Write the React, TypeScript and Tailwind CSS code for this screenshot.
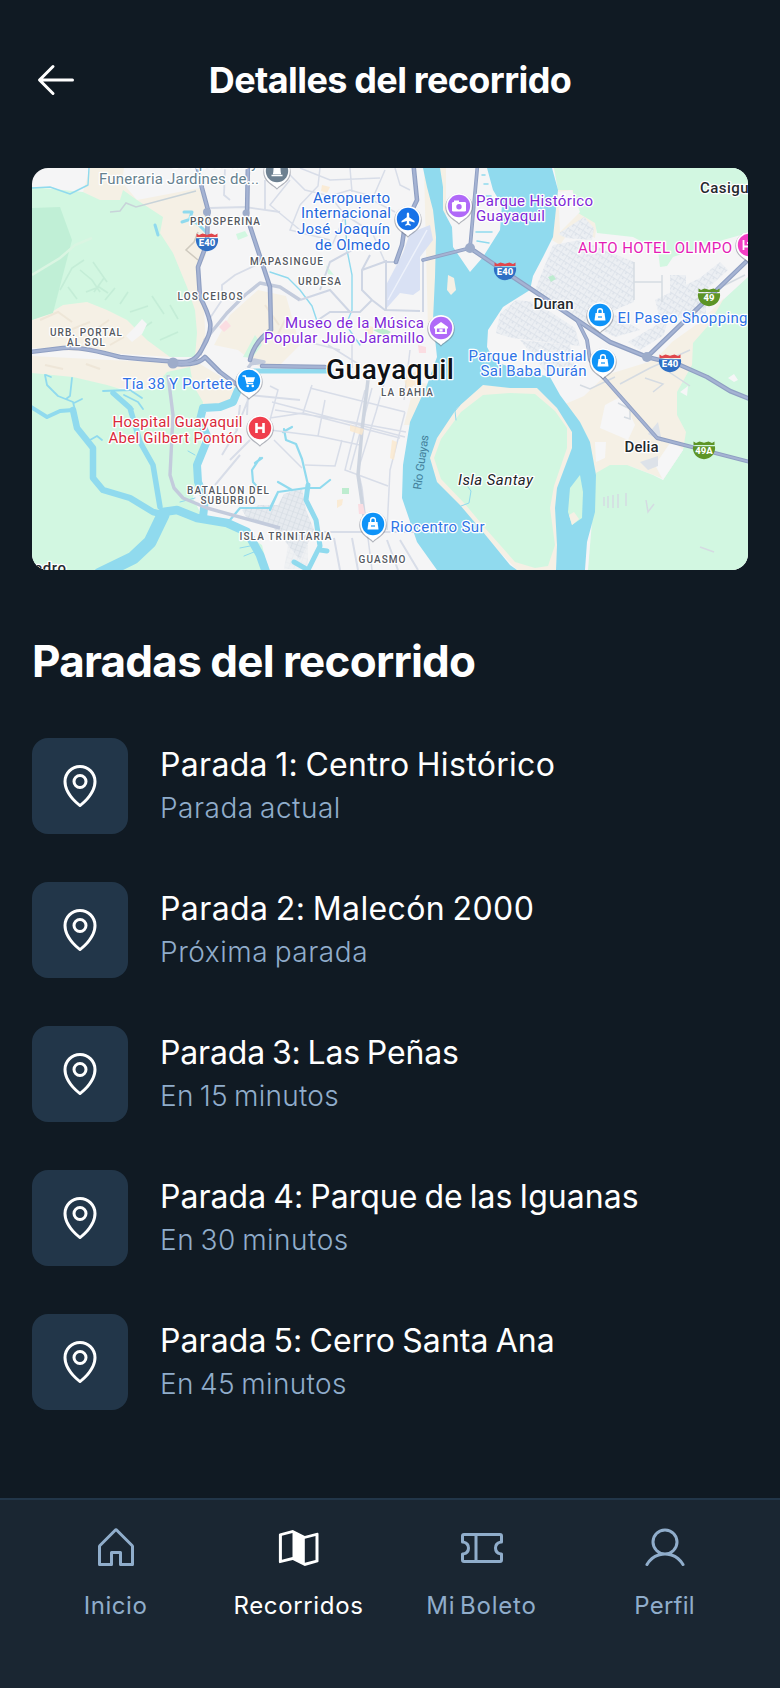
import React from "react";
import { PiArrowLeft, PiHouse, PiMapPin, PiTicket, PiUser } from "react-icons/pi";

type LabelProps = {
  x: number;
  y: number;
  w: number;
  children: string;
  fill?: string;
  size?: number;
  weight?: number;
  italic?: boolean;
};

/* Map label: x is the left edge, y the baseline and w the drawn width. */
function Label({ x, y, w, children, fill = "#55595f", size = 10, weight, italic }: LabelProps) {
  return (
    <text
      x={x}
      y={y}
      textLength={w}
      lengthAdjust="spacing"
      fontSize={size}
      fontWeight={weight ?? (size > 10 ? 400 : 500)}
      fontStyle={italic ? "italic" : undefined}
      fill={fill}
      stroke="#ffffff"
      strokeWidth={2.6}
      strokeLinejoin="round"
      paintOrder="stroke"
    >
      {children}
    </text>
  );
}

function Pin({ x, y, color, children }: { x: number; y: number; color: string; children?: React.ReactNode }) {
  return (
    <g transform={`translate(${x} ${y})`}>
      <path d="M0 18.800 C-3 14.800-13.700 11.500-13.700 1 A13.700 13.700 0 1 1 13.700 1 C13.700 11.500 3 14.800 0 18.800Z" fill="#6b7280" opacity=".5" />
      <path d="M0 17.300 C-3 13.300-12.900 10.800-12.900-.2 A12.900 12.900 0 1 1 12.900-.2 C12.900 10.800 3 13.300 0 17.300Z" fill="#fff" />
      <circle r="11.2" fill={color} />
      {children}
    </g>
  );
}

const Bag = () => (
  <g>
    <path d="M-4.500-2H4.500L5.500 5.500H-5.500Z" fill="#fff" />
    <path d="M-2.4 -2v-1.8a2.4 2.4 0 0 1 4.8 0V-2" fill="none" stroke="#fff" strokeWidth="1.4" />
    <path d="M-2 2h4" stroke="#0e93f8" strokeWidth="1.2" />
  </g>
);

function Shield({ x, y, text, top = "#e0474c", body = "#2f6fc4" }: { x: number; y: number; text: string; top?: string; body?: string }) {
  return (
    <g transform={`translate(${x} ${y})`}>
      <path d="M-10.5-8.5 L-8-7 L-4.5-8.5 L0-7.2 L4.5-8.5 L8-7 L10.5-8.5 L10.5-5 H-10.5Z" fill={top} />
      <path d="M-11-3.8H11C12 3 7 8.8 0 9.2C-7 8.8-12 3-11-3.8Z" fill={body} />
      <text x="0" y="4.4" textAnchor="middle" fontSize="9.5" fontWeight="800" fill="#fff">
        {text}
      </text>
    </g>
  );
}

const WATER = "#90daee";
const GREEN = "#d2f7e1";
const SAND = "#f5f0e5";

function CityMap() {
  return (
    <svg viewBox="32 168 716 402" preserveAspectRatio="none" className="block h-full w-full" fontFamily="Roboto, sans-serif">
      <defs>
        <pattern id="blocks" width="7" height="6" patternUnits="userSpaceOnUse" patternTransform="rotate(32)">
          <rect width="7" height="6" fill="#eceff3" />
          <path d="M0 0H7M0 0V6M3.5 0V3" stroke="#dbe1e9" strokeWidth="1.4" />
        </pattern>
        <pattern id="blocks2" width="5" height="5" patternUnits="userSpaceOnUse" patternTransform="rotate(20)">
          <rect width="5" height="5" fill="#e6eaef" />
          <path d="M0 0H5M0 0V5" stroke="#d3dae2" strokeWidth="1.2" />
        </pattern>
      </defs>
      <rect x="32" y="168" width="716" height="402" fill="#f5f5f6" />

      {/* Sand and built-up ground */}
      <g fill={SAND}>
        <path d="M83 192L90 168H124L122 182L137 200L200 188L209 215L206 255L196 275L204 310L206 345L195 358L160 235L120 201L100 201Z" />
        <path d="M32 318L60 300L105 300L170 357L32 348Z" />
        <path d="M32 356L110 360L120 372L110 388L32 376Z" />
        <path d="M110 360L200 364L235 385L230 402L203 406L150 388L110 388Z" />
        <path d="M258 290L286 296L300 345L280 365L258 366L238 350L214 345L230 315Z" />
        <path d="M424 168H446V250H436V330L428 330Z" />
        <path d="M415 382L430 384L410 425L404 425Z" />
        <path d="M554 168L573 190L575 209L597 222L595 238L573 226L560 245L552 240L558 190Z" />
        <path d="M596 476L580 422L563 405L584 396L606 375L655 360L672 342L700 322L724 298L706 400L688 440L664 479L630 466Z" />
        <path d="M483 385L510 386L540 387L560 408L575 432L574 450L560 488L556 570H517L483 535L434 482L427 458L436 434L456 406Z" />
      </g>

      {/* Parkland */}
      <g fill={GREEN}>
        <path d="M32 187L83 192L100 200H120L123 190L137 200L163 217L160 233L173 253L187 287L195 310L197 333L195 357L170 357L147 340L127 320L107 310L87 302L63 305L50 313L32 320Z" />
        <path d="M32 373L73 377L107 385L130 392L153 388L167 372L190 367L193 385L203 402L200 465L193 498L203 518L235 527L262 545L268 570H32Z" />
        <path d="M554 168H748V233L723 240L673 257L667 266L660 267L658 250L633 237L597 233L595 223L573 210V190L558 190Z" />
        <path d="M748 277L723 300L707 327L693 343L692 365L677 392V415L686 432L683 450L663 480L653 475L627 465H610L596 473L588 570H748Z" />
      </g>
      <path d="M558 192L572 190L580 212L560 232Z" fill="#f5f5f6" />
      <path d="M32 208L60 207L72 240L53 313L32 320Z" fill="#c0efd6" />
      <g fill="none" stroke="#bfe9d3" strokeWidth="1.6" opacity=".75">
        <path d="M80 270l12 10l8 12M93 262l14 20M104 278l-10 14M86 292l13-5l9 6M115 288l-10 12M68 287l9 12M140 330l12-8M130 312l18-6M160 340l18-8M120 304l8-12M60 290l12-22l12-8M152 296l12 18M170 305l8 14" />
      </g>
      <path d="M32 275L60 258L75 245L92 238" fill="none" stroke="#daf5e2" strokeWidth="2.5" />
      <g fill="none" stroke="#e9e0cf" strokeWidth="2" opacity=".6">
        <path d="M40 320l18-8l14 10M70 330l20-8M95 330l14-10M110 345l14-8M45 365l18 4M86 364l14 5M265 305l14 20M285 320l-10 20" />
      </g>
      <path d="M134 328L142 319L147 324L142 334L132 342L126 336Z" fill="#f5f5f6" />
      <g fill={GREEN}>
        <path d="M236 234L245 231L248 236L238 240Z" />
        <path d="M255 335L262 345L252 358L243 357Z" />
        <path d="M326 265L334 275L328 274Z" />
      </g>
      <path d="M219 327L226 320L231 326L224 332Z" fill="#fbdde2" />

      {/* Dense quarters */}
      <g fill="url(#blocks)">
        <path d="M584 217L594 228L592 240L566 238L558 234Z" />
        <path d="M553 245L580 240L634 262V302L610 312L640 330L615 337L578 318L535 290Z" />
        <path d="M516 300L535 302L575 328L580 346L512 338L496 333L500 314Z" />
        <path d="M520 340L570 345L576 372L548 374Z" />
        <path d="M655 300L700 278L720 262L728 270L706 290L706 318L660 318Z" />
        <path d="M628 342L668 318L664 335L640 350Z" />
        <path d="M670 275h16v20h-16z" />
      </g>
      <path d="M284 494L302 488L306 510L314 530L300 560L288 545L270 524L250 515L258 505L278 505Z" fill="url(#blocks2)" />
      <path d="M242 510L262 505L284 528L248 520Z" fill="url(#blocks2)" />
      <path d="M288 545h20v24h-24z" fill="url(#blocks2)" opacity=".4" />
      <path d="M605 405L622 396L635 425L628 440L600 428ZM595 442L606 442L605 458L596 462ZM655 465L672 440L683 450L663 480Z" fill="#f6f6f7" />
      <path d="M640 462l18-6v10l-10 4zM648 434l10-12l4 20z" fill="#dde2e9" />
      <path d="M680 392l8-6l-1 10zM728 378l6-4l4 6l-4 2z" fill="#f6f6f7" />

      {/* Airport */}
      <path d="M430 225L433 240L420 257V290L413 295L400 293L385 310V287L403 253L410 233Z" fill="#d9e1f4" />
      <path d="M388 300L427 230" stroke="#eef2fb" strokeWidth="1.4" />

      {/* Rivers */}
      <path
        d="M423 168L427 187L433 210L436 237L435 277L433 320L437 357L427 385L410 422L403 465L402 498L417 542L437 570H517L510 565L483 532L460 505L437 482L430 458L437 438L457 408L483 385L510 388H537L557 408L572 432V448L557 488L555 508L557 545L556 570H585L587 542L595 512L596 475L590 442L580 422L560 395L550 377L520 370L495 362L487 347L488 330L503 307L530 290L533 276L543 257L553 237L558 190L552 168H487L493 190L502 205L500 230L483 257L470 272L453 247L452 227L443 210V187L440 168Z"
        fill={WATER}
      />
      <path d="M448 275L454 278L456 290L451 295L447 290Z" fill={SAND} />
      <path d="M510 393L535 394L555 411L567 428V448L554 486L550 508L555 545L548 566L535 568L515 562L485 528L465 504L441 479L434 458L441 439L461 412L483 395Z" fill={GREEN} />
      <path d="M580 475L570 488L568 512L572 525L582 518L583 492Z" fill={GREEN} />
      <path d="M569 515L574 512L579 519L572 525Z" fill={SAND} />
      <g fill="none" stroke={WATER} strokeLinecap="round" strokeLinejoin="round">
        <path d="M31 407L47 417L60 411L73 410" strokeWidth="4" />
        <path d="M73 410L77 428L93 448V478L103 490L130 498L153 512L165 515" strokeWidth="6.5" />
        <path d="M163 512L177 510L197 518L227 523L247 532L260 555L266 572" strokeWidth="8.5" />
        <path d="M163 515L150 542L133 558L100 574" strokeWidth="13" />
        <path d="M113 393L130 408L140 442L153 465L160 507" strokeWidth="5.5" />
        <path d="M238 390L233 402L220 407L203 408L200 420L208 438L197 465L198 482L205 498L203 518" strokeWidth="8" />
        <path d="M241 388L254 371H330" strokeWidth="5" />
        <path d="M45 375L47 385L58 396L73 402L75 410M72 378L70 396L66 399M82 399L74 403M103 391L130 390L142 398M124 395L138 402L143 409M126 404L133 409M90 440L97 436L102 440M46 375l5 2" strokeWidth="1.8" />
        <path d="M283 432L292 427M284 429L286 440L296 444L302 459L308 485M230 520L240 508L270 508L278 492L306 488L320 488L330 480M278 482L292 490M278 492L270 510" strokeWidth="2.2" />
        <path d="M308 485L306 500L316 520L320 546L308 570M320 550L327 551M308 570L294 562" strokeWidth="5" />
        <path d="M260 458L252 470L253 482L260 490M262 458L255 463" strokeWidth="2.2" />
        <path d="M32 188L50 187L70 194L88 185L89 168M270 272L288 278L300 290L312 306L318 324M345 215L347 250L352 275L352 310L346 325L360 345" strokeWidth="1.4" />
        <path d="M155 225L158 235M184 212L192 212L190 218L199 225L206 232M188 220L182 222" strokeWidth="3" />
        <path d="M240 548L250 546M244 556L254 552M195 455L188 451M195 498L180 502" strokeWidth="1" />
        <path d="M482 175h3M484 184h4M486 196h5M476 232h16M477 241l12 2" strokeWidth="1.5" />
        <path d="M456 420l-1-9l5-6M461 506l8-3l2-12l-3-4" strokeWidth="1" />
      </g>

      {/* Minor streets */}
      <g fill="none" stroke="#d8dde8" strokeWidth="1.5">
        <path d="M110 212l10-1l6-8l10 4l60-16" stroke="#c8d3d9" />
        <path d="M210 208L245 207L280 212M225 168L224 195L230 200M265 180v30M200 297l8 20M260 263L235 275L222 285V300L210 318" strokeWidth="1.8" />
        <path d="M198 232l-4 10l-8 8l12 10" stroke="#cfcabf" />
        <path d="M283 168L305 190L330 196L350 190L385 200M320 168L318 186L300 205M350 168L352 192M300 205L290 230L330 240M330 196L345 215L330 250M385 170L372 200L395 212M290 180L270 205L300 230M345 215L372 232L385 262M300 168L330 180L380 178M395 168L400 185L410 190" />
        <path d="M370 255L362 270V290L372 300L385 310L420 311M423 260V312M362 270L384 262L395 262M372 300L360 312H330L318 320M300 300L330 290L350 312M352 250L330 262L320 290M386 260V310" stroke="#cfd6e4" strokeWidth="2" />
        <path d="M272 402L405 437M275 410L330 418L406 432M312 385L303 413L270 418M325 400L318 436M303 413L400 438M385 380L376 412L358 470L362 488L367 530L372 570M365 390L345 470L388 486M372 388L350 470M405 412L390 470L387 530M318 436L360 445M342 440L335 466L305 465M310 388L405 412M270 386L278 390L270 420M270 430L318 436M274 440L302 468M300 340L340 350M328 345L360 365M352 340V368M410 350L404 400" />
        <path d="M320 532H420M334 538L340 570M352 538L358 570M400 540L418 570M387 540L398 570M236 430L250 395L300 400M240 405L237 430L222 455M230 460L250 440M215 485L240 455M248 395L247 415" strokeWidth="2" />
        <path d="M368 380L362 430L358 475L366 530" stroke="#cdd4df" strokeWidth="3.5" />
        <path d="M634 262V300M634 282H662M662 275V302M580 385l10 4l25-12M618 403l12 6v10l-6-2M604 497v9M608 496v12M613 495v13M618 494v14M626 493v13M646 500l2 12l6-8M700 547l14 5M645 378l18 6l-10 8M660 366l30 20" stroke="#d5dbe2" />
        <path d="M695 300L745 275M620 384L650 368L690 350" stroke="#d5dbe2" />
      </g>
      <g fill="#fbe9cd" opacity=".8">
        <path d="M350 425l14 4l-2 6l-12-4zM392 440l5 2l-3 18l-4-2zM337 500l6-1l-1 6l-5 3zM322 185l8 2l-3 6l-6-2zM365 325l8 2v8l-8-2zM404 378l14-8l-3 14l-8 8z" />
      </g>
      <path d="M342 488h7v6h-7z" fill="#bdeccf" />
      <path d="M548 277l5-2l3 4l-5 3zM373 330l10-2l8 4l-6 4z" fill="#bdeccf" />
      <path d="M358 504h5l2 10h-6zM418 345l8 2v6h-7z" fill="#fbdde2" />

      {/* Major roads */}
      <g fill="none" stroke="#c3cbdc" strokeWidth="3.4" strokeLinejoin="round">
        <path d="M200 355L205 340L227 313L245 295L260 283L280 287L300 300" />
        <path d="M168 375L173 415L170 475L174 488L183 498L207 508L280 528" />
        <path d="M248 368L254 360L264 362L250 364" />
      </g>
      <g fill="none" strokeLinejoin="round" strokeLinecap="round">
        {[
          { stroke: "#8f9fc2", width: 4.6 },
          { stroke: "#a5b3d3", width: 2.4 },
        ].map(({ stroke, width }) => (
          <g key={stroke} stroke={stroke} strokeWidth={width}>
            <path d="M196 160L202 188L208 210L207 243L198 267L200 297Q208 312 210 322T203 347Q196 362 184 362T120 357Q80 346 63 348L30 352" />
            <path d="M248 160L247 217L270 287L271 330Q254 342 250 360M262 366L325 367" />
            <path d="M173 364Q198 366 205 357L220 372L240 387" />
            <path d="M413 160L417 200L405 225L402 245L396 262" />
            <path d="M423 260L470 248L478 160" strokeWidth={width * 0.8} />
            <path d="M470 248L510 275L543 297L577 320L610 342L647 357L680 365L707 377L730 391L750 399" />
            <path d="M647 357L750 258" />
            <path d="M577 320L587 340L590 360L603 377L657 438L750 462" strokeWidth={width * 0.85} />
          </g>
        ))}
        <circle cx="173" cy="363" r="5.5" fill="#9dacca" />
        <circle cx="470" cy="248" r="5" fill="#9dacca" />
        <circle cx="647" cy="357" r="5" fill="#9dacca" />
        <circle cx="207" cy="212" r="4" fill="#9dacca" />
        <circle cx="246" cy="213" r="3.5" fill="#9dacca" />
      </g>

      <Shield x={207} y={242} text="E40" />
      <Shield x={505} y={271} text="E40" />
      <Shield x={670} y={363} text="E40" />
      <Shield x={709} y={297} text="49" top="#5d9426" body="#5d9426" />
      <Shield x={704} y={450} text="49A" top="#5d9426" body="#5d9426" />

      <Label x={170} y={168} w={88} fill="#5f7f93" size={15}>Camposanto y</Label>
      <Label x={99} y={183.5} w={160} fill="#66818f" size={15}>Funeraria Jardines de...</Label>
      <Label x={190} y={225} w={70}>PROSPERINA</Label>
      <Label x={250} y={264.5} w={73}>MAPASINGUE</Label>
      <Label x={298} y={284.5} w={43}>URDESA</Label>
      <Label x={177.5} y={299.5} w={65}>LOS CEIBOS</Label>
      <Label x={50} y={335.5} w={72}>URB. PORTAL</Label>
      <Label x={67} y={345.5} w={38}>AL SOL</Label>
      <Label x={187} y={493.5} w={82}>BATALLON DEL</Label>
      <Label x={200.5} y={503.5} w={55}>SUBURBIO</Label>
      <Label x={239.5} y={539.5} w={92}>ISLA TRINITARIA</Label>
      <Label x={358.5} y={563} w={47}>GUASMO</Label>
      <Label x={381} y={396} w={52}>LA BAHIA</Label>

      <g transform="translate(421 490) rotate(-82)">
        <text fontSize="11.5" fill="#43809b" textLength="55">Río Guayas</text>
      </g>

      <Label x={313} y={202.5} w={77} size={15} fill="#2467dc">Aeropuerto</Label>
      <Label x={301} y={218} w={90} size={15} fill="#2467dc">Internacional</Label>
      <Label x={297} y={234} w={93} size={15} fill="#2467dc">José Joaquín</Label>
      <Label x={315} y={249.5} w={75} size={15} fill="#2467dc">de Olmedo</Label>
      <Label x={476} y={205.5} w={117} size={15} fill="#7e28d8">Parque Histórico</Label>
      <Label x={476} y={221} w={69} size={15} fill="#7e28d8">Guayaquil</Label>
      <Label x={285} y={327.5} w={139} size={15} fill="#7e28d8">Museo de la Música</Label>
      <Label x={264} y={343} w={160} size={15} fill="#7e28d8">Popular Julio Jaramillo</Label>
      <Label x={578} y={252.5} w={154} size={15} fill="#e41cb6">AUTO HOTEL OLIMPO</Label>
      <Label x={617.5} y={322.5} w={130} size={15} fill="#2f74e6">El Paseo Shopping</Label>
      <Label x={468.5} y={360.5} w={118} size={15} fill="#2f74e6">Parque Industrial</Label>
      <Label x={480.5} y={376} w={106} size={15} fill="#2f74e6">Sai Baba Durán</Label>
      <Label x={122.5} y={388.5} w={110} size={15} fill="#2f70e6">Tía 38 Y Portete</Label>
      <Label x={112.5} y={427} w={130} size={15} fill="#d92a3b">Hospital Guayaquil</Label>
      <Label x={108.5} y={442.5} w={134} size={15} fill="#d92a3b">Abel Gilbert Pontón</Label>
      <Label x={390.5} y={531.5} w={94} size={15} fill="#2f74e6">Riocentro Sur</Label>

      <Label x={326} y={379} w={128} size={28} weight={500} fill="#101216">Guayaquil</Label>
      <Label x={533.5} y={308.5} w={40} size={15} weight={500} fill="#26292e">Duran</Label>
      <Label x={624.5} y={451.5} w={34} size={15} weight={500} fill="#26292e">Delia</Label>
      <Label x={700} y={192.5} w={57} size={15} weight={500} fill="#26292e">Casigua</Label>
      <Label x={458} y={484.5} w={75} size={15} italic fill="#202328">Isla Santay</Label>
      <Label x={24} y={573} w={42} size={15} weight={500} fill="#26292e">Pedro</Label>

      <Pin x={277} y={171} color="#6d8090">
        <path d="M-5.500 4.500H5.500M-4 2.500H4M-2.500-6H2.500L3 1H-3Z" fill="#fff" stroke="#fff" strokeWidth="1.4" />
      </Pin>
      <Pin x={408} y={219} color="#1772e8">
        <path d="M0-6.500c1 0 1.200 1 1.200 2v2.800L6.500 2v1.500L1.200 2v2.500l1.600 1.200v1L0 6l-2.800.7v-1L-1.200 4.500V2L-6.500 3.500V2L-1.200-1.700v-2.800c0-1 .2-2 1.200-2Z" fill="#fff" />
      </Pin>
      <Pin x={459} y={206} color="#b069f8">
        <rect x="-7" y="-4" width="14" height="9.500" rx="1.200" fill="#fff" />
        <rect x="-5" y="-5.500" width="5" height="3" fill="#fff" />
        <circle cy=".7" r="2.700" fill="#b069f8" />
      </Pin>
      <Pin x={441} y={328} color="#b069f8">
        <path d="M-7-1L0-6L7-1V.5H-7Z" fill="#fff" />
        <path d="M-5 0V5H5V0" fill="none" stroke="#fff" strokeWidth="1.8" />
        <rect x="-1.600" y="1.200" width="3.200" height="2.400" fill="#fff" />
      </Pin>
      <Pin x={249} y={381} color="#0e93f8">
        <path d="M-6.500-5h2.700l2 7.500h6" fill="none" stroke="#fff" strokeWidth="1.500" />
        <path d="M-3.500-3.800H6L4.500 1H-2.200Z" fill="#fff" />
        <circle cx="-1.300" cy="5" r="1.300" fill="#fff" />
        <circle cx="3.800" cy="5" r="1.300" fill="#fff" />
      </Pin>
      <Pin x={260} y={428} color="#f03e4d">
        <path d="M-3.500-5V5M3.500-5V5M-3.500 0H3.500" stroke="#fff" strokeWidth="2.600" />
      </Pin>
      <Pin x={600} y={315} color="#0e93f8"><Bag /></Pin>
      <Pin x={603} y={361} color="#0e93f8"><Bag /></Pin>
      <Pin x={373} y={524} color="#0e93f8"><Bag /></Pin>
      <Pin x={749} y={245} color="#f23fc4">
        <path d="M-5.500-5V5M-5.500 1.500H5M-2-2H5V5" fill="none" stroke="#fff" strokeWidth="1.800" />
      </Pin>
    </svg>
  );
}

function TrifoldIcon() {
  return (
    <svg viewBox="0 0 48 48" className="size-12" fill="currentColor" fillRule="evenodd">
      <path d="M4.800 9.500L17.800 6L29.800 12L42.300 8.800Q43.500 8.600 43.500 9.900V37.200Q43.500 38 42.700 38.300L29.800 42L17.800 36L5.200 39.100Q3.900 39.300 3.900 38V10.600Q3.900 9.800 4.800 9.500ZM6.900 11.700V35.700L17.500 33V9ZM29.800 14.700V38.700L40.500 36V12Z" />
    </svg>
  );
}

const stops = [
  { name: "Parada 1: Centro Histórico", status: "Parada actual", nameTracking: "tracking-[0.32px]", statusTracking: "tracking-[0.5px]" },
  { name: "Parada 2: Malecón 2000", status: "Próxima parada", nameTracking: "tracking-[0.4px]", statusTracking: "tracking-[0.55px]" },
  { name: "Parada 3: Las Peñas", status: "En 15 minutos", nameTracking: "tracking-[-0.15px]", statusTracking: "tracking-[0.25px]" },
  { name: "Parada 4: Parque de las Iguanas", status: "En 30 minutos", nameTracking: "tracking-[0.03px]", statusTracking: "tracking-[0.5px]" },
  { name: "Parada 5: Cerro Santa Ana", status: "En 45 minutos", nameTracking: "tracking-[0.08px]", statusTracking: "tracking-[0.35px]" },
];

const tabs = [
  { label: "Inicio", icon: <PiHouse className="size-12" />, active: false, tracking: "tracking-[0.55px]" },
  { label: "Recorridos", icon: <TrifoldIcon />, active: true, tracking: "tracking-[0.65px]" },
  { label: "Mi Boleto", icon: <PiTicket className="size-12" />, active: false, tracking: "tracking-[0.8px]" },
  { label: "Perfil", icon: <PiUser className="size-12" />, active: false, tracking: "tracking-[0.2px]" },
];

export default function App() {
  return (
    <div className="flex h-[1688px] w-[780px] flex-col overflow-hidden bg-[#101a23] font-['Inter',sans-serif] text-white">
      <header className="flex h-36 items-center px-8 pt-4">
        <button className="flex size-12 items-center justify-center" aria-label="Volver">
          <PiArrowLeft className="size-12" />
        </button>
        <h1 className="flex-1 pr-12 text-center text-[36px] leading-[46px] font-bold tracking-[-0.6px] [word-spacing:-0.5px]">Detalles del recorrido</h1>
      </header>

      <div className="px-8 py-6">
        <div className="h-[402px] overflow-hidden rounded-2xl">
          <CityMap />
        </div>
      </div>

      <h2 className="h-[120px] px-8 pt-10 text-[44px] leading-[55px] font-bold tracking-[-0.75px] [word-spacing:-0.5px]">Paradas del recorrido</h2>

      <ul className="flex flex-col">
        {stops.map((stop) => (
          <li key={stop.name} className="flex h-36 items-center gap-8 px-8">
            <div className="flex size-24 items-center justify-center rounded-2xl bg-[#223649]">
              <PiMapPin className="size-12" />
            </div>
            <div className="flex flex-col whitespace-nowrap">
              <p className={`text-[32px] leading-[48px] [word-spacing:-2px] ${stop.nameTracking}`}>{stop.name}</p>
              <p className={`-mt-0.5 mb-0.5 text-[28px] leading-[42px] font-[350] text-[#90adcb] [word-spacing:-2px] ${stop.statusTracking}`}>{stop.status}</p>
            </div>
          </li>
        ))}
      </ul>

      <nav className="mt-auto flex h-[190px] gap-4 border-t-2 border-[#223649] bg-[#1a2632] px-8 pt-4">
        {tabs.map((tab) => (
          <a key={tab.label} className={`flex flex-1 flex-col items-center gap-2 ${tab.active ? "text-white" : "text-[#90adcb]"}`}>
            <span className="flex h-16 items-center justify-center">{tab.icon}</span>
            <span className={`text-[24px] leading-9 whitespace-nowrap [word-spacing:-3px] ${tab.tracking}`}>{tab.label}</span>
          </a>
        ))}
      </nav>
    </div>
  );
}
